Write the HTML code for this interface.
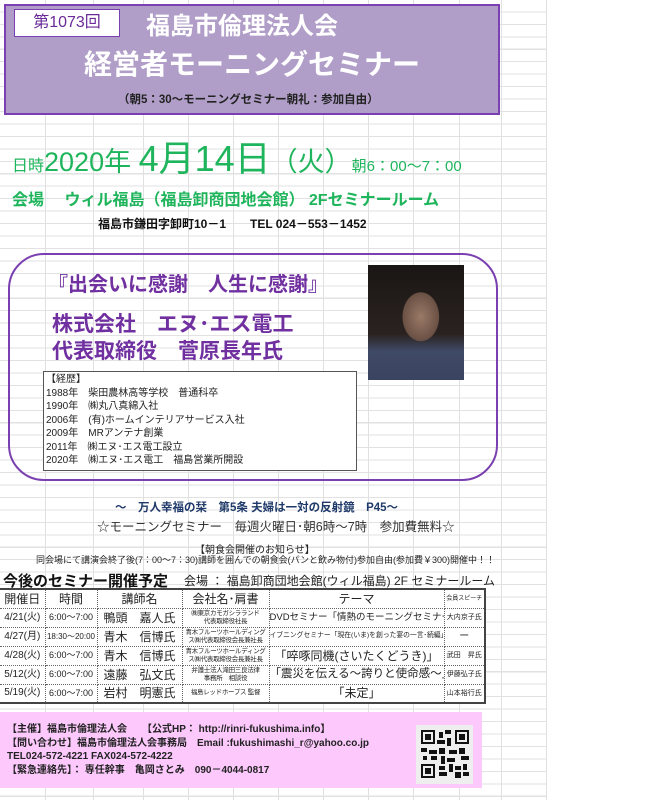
<!DOCTYPE html>
<html><head><meta charset="utf-8"><style>
*{margin:0;padding:0;box-sizing:border-box}
body{width:650px;height:800px;background:#fff;position:relative;overflow:hidden;font-family:"Liberation Sans","Noto Sans CJK JP",sans-serif}
.a{position:absolute;white-space:nowrap}
.grid{position:absolute;left:0;top:0;width:546px;height:800px;
background-image:repeating-linear-gradient(to bottom,transparent 0,transparent 11.4px,#e2e2e2 11.4px,#e2e2e2 12.45px);}
.v{position:absolute;top:0;width:1px;height:800px;background:#e0e0e0}
table{border-collapse:collapse;table-layout:fixed;position:absolute;left:0;top:588px;width:485px;background:#fff;color:#222}
td{border:1px dotted #666;text-align:center;height:19px;padding:0;font-size:10px;line-height:1;white-space:nowrap;overflow:hidden}
tr:first-child td{border-top:2px solid #444}
tr:last-child td{border-bottom:2px solid #444}
td:last-child{border-right:2px solid #444}
td:first-child{border-left:none}
.s{font-size:6.5px;line-height:8px;letter-spacing:-0.3px}
.n{font-size:12px}
</style></head><body>
<div class="grid"></div>
<div class="v" style="left:45px"></div><div class="v" style="left:93px"></div><div class="v" style="left:143px"></div><div class="v" style="left:188px"></div><div class="v" style="left:233px"></div><div class="v" style="left:278px"></div><div class="v" style="left:323px"></div><div class="v" style="left:368px"></div><div class="v" style="left:413px"></div><div class="v" style="left:459px"></div><div class="v" style="left:501px"></div><div class="v" style="left:546px"></div>

<div class="a" style="left:4px;top:4px;width:496px;height:111px;background:#b09ec8;border:2px solid #7a3fb0"></div>
<div class="a" style="left:14px;top:9px;width:106px;height:28px;background:#fff;border:1px solid #7a3fb0;color:#6a2a9a;font-size:16px;line-height:26px;text-align:center">第1073回</div>
<div class="a" style="left:146px;top:13px;color:#fff;font-size:24px;font-weight:bold;line-height:28px">福島市倫理法人会</div>
<div class="a" style="left:84px;top:47px;color:#fff;font-size:28px;font-weight:bold;line-height:36px">経営者モーニングセミナー</div>
<div class="a" style="left:118px;top:91px;color:#222;font-size:11.5px;font-weight:bold">（朝5：30～モーニングセミナー朝礼：参加自由）</div>

<div class="a" style="left:12px;top:142px;color:#1fb55c;line-height:34px">
<span style="font-size:16px">日時</span><span style="font-size:27px">2020年 </span><span style="font-size:36px">4月14日</span><span style="font-size:27px">（火）</span><span style="font-size:15px">朝6：00～7：00</span></div>
<div class="a" style="left:12px;top:186px;color:#1fb55c;font-size:16px;font-weight:bold">会場　 ウィル福島（福島卸商団地会館） 2Fセミナールーム</div>
<div class="a" style="left:98px;top:215px;color:#111;font-size:12px;font-weight:bold">福島市鎌田字卸町10－1　　TEL  024－553－1452</div>

<div class="a" style="left:8px;top:253px;width:490px;height:228px;border:2px solid #7a3fb0;border-radius:36px"></div>
<div class="a" style="left:48px;top:268px;color:#7030a0;font-size:20px;font-weight:bold">『出会いに感謝　人生に感謝』</div>
<div class="a" style="left:52px;top:311px;color:#7030a0;font-size:21px;font-weight:bold;line-height:27px">株式会社　エヌ･エス電工<br>代表取締役　菅原長年氏</div>
<div class="a" style="left:368px;top:265px;width:96px;height:115px;background:radial-gradient(ellipse 30px 40px at 55% 45%,#9a7a68 0,#6a5044 60%,transparent 62%),linear-gradient(to bottom,#1a1614 0,#2a2220 60%,#3f4a66 75%,#3a4460 100%)"></div>
<div class="a" style="left:43px;top:371px;width:314px;height:100px;border:1px solid #555;background:#fff;font-size:10px;line-height:13.5px;color:#222;padding:1px 2px">【経歴】<br>1988年　柴田農林高等学校　普通科卒<br>1990年　㈱丸八真綿入社<br>2006年　(有)ホームインテリアサービス入社<br>2009年　MRアンテナ創業<br>2011年　㈱エヌ･エス電工設立<br>2020年　㈱エヌ･エス電工　福島営業所開設</div>

<div class="a" style="left:115px;top:499px;color:#1f3a6a;font-size:11.5px;font-weight:bold">～　万人幸福の栞　第5条 夫婦は一対の反射鏡　P45～</div>
<div class="a" style="left:97px;top:516px;color:#333;font-size:12.5px">☆モーニングセミナー　毎週火曜日･朝6時～7時　参加費無料☆</div>
<div class="a" style="left:195px;top:541px;color:#222;font-size:10px">【朝食会開催のお知らせ】</div>
<div class="a" style="left:36px;top:553px;color:#222;font-size:9px">同会場にて講演会終了後(7：00～7：30)講師を囲んでの朝食会(パンと飲み物付)参加自由(参加費￥300)開催中！！</div>
<div class="a" style="left:3px;top:570px;color:#111;font-size:15px;font-weight:bold">今後のセミナー開催予定</div>
<div class="a" style="left:184px;top:572px;color:#222;font-size:12px">会場 ： 福島卸商団地会館(ウィル福島) 2F セミナールーム</div>

<table>
<colgroup><col style="width:45px"><col style="width:52px"><col style="width:85px"><col style="width:87px"><col style="width:175px"><col style="width:41px"></colgroup>
<tr><td class="n">開催日</td><td class="n">時間</td><td class="n">講師名</td><td class="n">会社名･肩書</td><td class="n">テーマ</td><td style="font-size:6px">会員スピーチ</td></tr>
<tr><td>4/21(火)</td><td style="font-size:9px">6:00～7:00</td><td class="n">鴨頭　嘉人氏</td><td class="s">㈱東京カモガシラランド<br>代表取締役社長</td><td style="font-size:9.5px">DVDセミナー「情熱のモーニングセミナー」</td><td style="font-size:7px">大内京子氏</td></tr>
<tr><td>4/27(月)</td><td style="font-size:8px">18:30～20:00</td><td class="n">青木　信博氏</td><td class="s">青木フルーツホールディング<br>ス㈱代表取締役会長兼社長</td><td style="font-size:6.8px">イブニングセミナー「現在(いま)を創った宴の一言･続編」</td><td>ー</td></tr>
<tr><td>4/28(火)</td><td style="font-size:9px">6:00～7:00</td><td class="n">青木　信博氏</td><td class="s">青木フルーツホールディング<br>ス㈱代表取締役会長兼社長</td><td style="font-size:12px">「啐啄同機(さいたくどうき)」</td><td style="font-size:7px">武田　昇氏</td></tr>
<tr><td>5/12(火)</td><td style="font-size:9px">6:00～7:00</td><td class="n">遠藤　弘文氏</td><td class="s">弁護士法人滝田三良法律<br>事務所　相談役</td><td style="font-size:11.5px">「震災を伝える～誇りと使命感～」</td><td style="font-size:7px">伊藤弘子氏</td></tr>
<tr><td>5/19(火)</td><td style="font-size:9px">6:00～7:00</td><td class="n">岩村　明憲氏</td><td class="s">福島レッドホープス 監督</td><td style="font-size:12px">「未定」</td><td style="font-size:7px">山本裕行氏</td></tr>
</table>

<div class="a" style="left:0;top:712px;width:482px;height:76px;background:#fdc9fd"></div>
<div class="a" style="left:7px;top:723px;color:#222;font-size:10px;font-weight:bold;line-height:13.5px">【主催】福島市倫理法人会　　【公式HP： http://rinri-fukushima.info】<br>【問い合わせ】福島市倫理法人会事務局　Email :fukushimashi_r@yahoo.co.jp<br>TEL024-572-4221  FAX024-572-4222<br>【緊急連絡先】： 専任幹事　亀岡さとみ　090－4044-0817</div>
<div class="a" style="left:416px;top:725px;width:57px;height:59px;background:#eee"></div>
<svg class="a" style="left:421px;top:730px" width="48" height="48" viewBox="0 0 24 24" shape-rendering="crispEdges">
<g fill="#111"><rect x="0" y="0" width="7" height="7"/><rect x="17" y="0" width="7" height="7"/><rect x="0" y="17" width="7" height="7"/></g>
<g fill="#eee"><rect x="1" y="1" width="5" height="5"/><rect x="18" y="1" width="5" height="5"/><rect x="1" y="18" width="5" height="5"/></g>
<g fill="#111"><rect x="2" y="2" width="3" height="3"/><rect x="19" y="2" width="3" height="3"/><rect x="2" y="19" width="3" height="3"/>
<rect x="9" y="1" width="2" height="3"/><rect x="12" y="0" width="3" height="2"/><rect x="8" y="5" width="4" height="2"/><rect x="13" y="4" width="2" height="4"/>
<rect x="0" y="9" width="3" height="2"/><rect x="4" y="10" width="4" height="2"/><rect x="9" y="9" width="3" height="3"/><rect x="14" y="10" width="4" height="2"/><rect x="19" y="9" width="3" height="3"/>
<rect x="1" y="13" width="2" height="2"/><rect x="5" y="13" width="3" height="2"/><rect x="10" y="13" width="2" height="4"/><rect x="13" y="14" width="4" height="2"/><rect x="20" y="13" width="4" height="2"/>
<rect x="9" y="18" width="3" height="2"/><rect x="14" y="17" width="2" height="4"/><rect x="17" y="18" width="3" height="2"/><rect x="21" y="17" width="2" height="3"/>
<rect x="9" y="21" width="4" height="2"/><rect x="17" y="21" width="3" height="3"/><rect x="21" y="21" width="3" height="2"/></g>
</svg>
</body></html>
